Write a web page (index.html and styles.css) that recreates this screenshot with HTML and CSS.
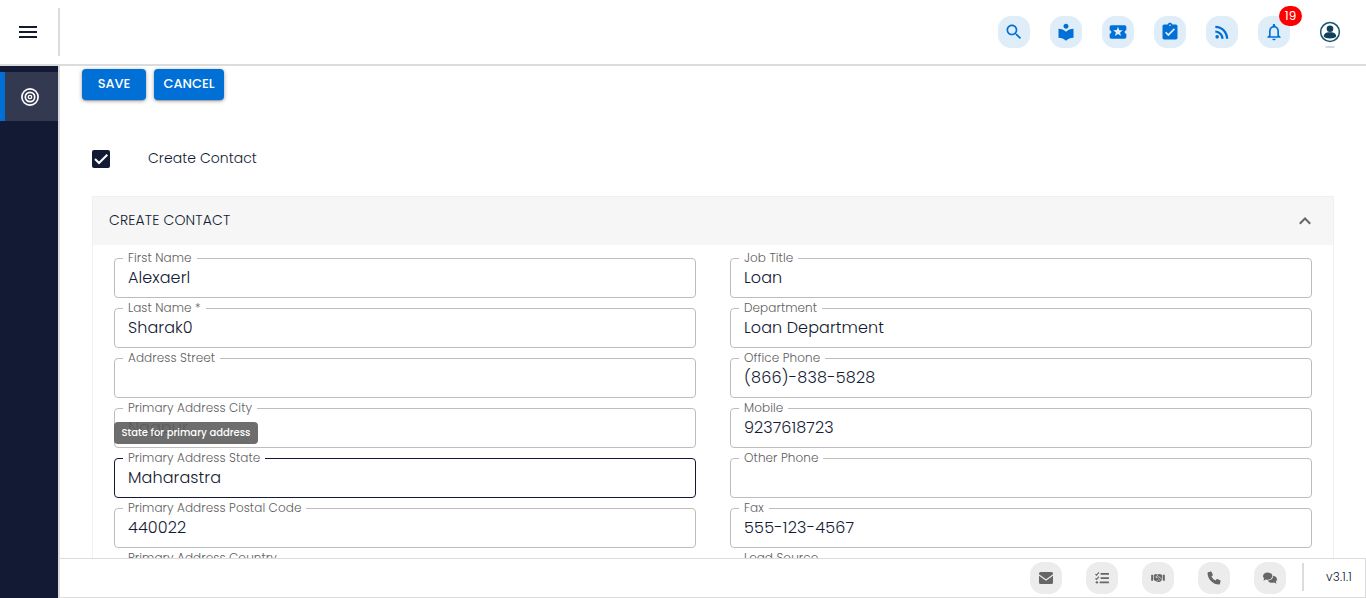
FILE: index.html
```html
<!DOCTYPE html>
<html lang="en">
<head>
<meta charset="utf-8">
<title>Create Contact</title>
<link rel="stylesheet" href="styles.css">
</head>
<body>
<div class="app">
  <header class="topbar">
    <div class="menu"><svg width="18" height="12" viewBox="0 0 18 12"><path d="M0 0h18v2H0zM0 5h18v2H0zM0 10h18v2H0z"/></svg></div>
    <nav class="actions">
      <div class="chip"><svg viewBox="0 0 24 24"><path d="M15.5 14h-.79l-.28-.27C15.41 12.59 16 11.11 16 9.5 16 5.91 13.09 3 9.5 3S3 5.91 3 9.5 5.91 16 9.5 16c1.61 0 3.09-.59 4.23-1.57l.27.28v.79l5 4.99L20.49 19l-4.99-5zm-6 0C7.01 14 5 11.99 5 9.5S7.01 5 9.5 5 14 7.01 14 9.5 11.99 14 9.5 14z"/></svg></div>
      <div class="chip"><svg viewBox="0 0 24 24"><path d="M12 11.55C9.64 9.35 6.48 8 3 8v11c3.48 0 6.64 1.35 9 3.55 2.36-2.19 5.52-3.55 9-3.55V8c-3.48 0-6.64 1.35-9 3.55zM12 8c1.66 0 3-1.34 3-3s-1.34-3-3-3-3 1.34-3 3 1.34 3 3 3z"/></svg></div>
      <div class="chip"><svg viewBox="0 0 24 24"><path d="M20 12c0-1.1.9-2 2-2V6c0-1.1-.9-2-2-2H4c-1.1 0-1.99.9-1.99 2v4c1.1 0 1.99.9 1.99 2s-.89 2-2 2v4c0 1.1.9 2 2 2h16c1.1 0 2-.9 2-2v-4c-1.1 0-2-.9-2-2zm-4.42 4.8L12 14.5l-3.58 2.3 1.08-4.12-3.29-2.69 4.24-.25L12 5.8l1.54 3.95 4.24.25-3.29 2.69 1.09 4.11z"/></svg></div>
      <div class="chip"><svg viewBox="0 0 24 24"><path d="M19 3h-4.18C14.4 1.84 13.3 1 12 1c-1.3 0-2.4.84-2.82 2H5c-1.1 0-2 .9-2 2v14c0 1.1.9 2 2 2h14c1.1 0 2-.9 2-2V5c0-1.1-.9-2-2-2zm-7 0c.55 0 1 .45 1 1s-.45 1-1 1-1-.45-1-1 .45-1 1-1zm-2 14l-4-4 1.41-1.41L10 14.17l6.59-6.59L18 9l-8 8z"/></svg></div>
      <div class="chip"><svg viewBox="0 0 24 24"><circle cx="6.18" cy="17.82" r="2.18"/><path d="M4 4.44v2.83c7.03 0 12.73 5.7 12.73 12.73h2.83c0-8.59-6.97-15.56-15.56-15.56zm0 5.66v2.83c3.9 0 7.07 3.17 7.07 7.07h2.83c0-5.47-4.43-9.9-9.9-9.9z"/></svg></div>
      <div class="chip"><svg viewBox="0 0 24 24"><path d="M12 22c1.1 0 2-.9 2-2h-4c0 1.1.9 2 2 2zm6-6v-5c0-3.07-1.63-5.64-4.5-6.32V4c0-.83-.67-1.5-1.5-1.5s-1.5.67-1.5 1.5v.68C7.64 5.36 6 7.92 6 11v5l-2 2v1h16v-1l-2-2zm-2 1H8v-6c0-2.48 1.51-4.5 4-4.5s4 2.02 4 4.5v6z"/></svg><span class="badge">19</span></div>
      <div class="avatar"><svg width="22" height="28" viewBox="0 0 22 28"><circle cx="11" cy="11" r="9.4" fill="#fff" stroke="#17566f" stroke-width="1.5"/><circle cx="11" cy="7.8" r="3.3" fill="#123f5a"/><path d="M4.8 15.6c0-2.7 1.9-4.1 4.2-4.4h4c2.3.3 4.2 1.700 4.200 4.400-1.400 1.400-3.400 1.900-6.200 1.900s-4.800-.5-6.200-1.900z" fill="#123f5a"/><path d="M6.500 26h9" stroke="#cbd6db" stroke-width="1.800"/></svg></div>
    </nav>
  </header>
  <div class="body">
    <aside class="sidebar">
      <div class="side-item"><svg width="18" height="18" viewBox="0 0 18 18" fill="none" stroke="#fff"><circle cx="9" cy="9" r="8.100" stroke-width="1.700"/><circle cx="9" cy="9" r="4.700" stroke-width="1.700"/><circle cx="9" cy="9" r="1.700" stroke-width="1.300"/></svg></div>
    </aside>
    <div class="page">
      <main class="content">
        <div class="buttons"><button class="btn save">SAVE</button><button class="btn cancel">CANCEL</button></div>
        <div class="toggle">
          <svg width="18" height="18" viewBox="0 0 18 18"><rect width="18" height="18" rx="2" fill="#131a33"/><path d="M3 9l4 4 8.300-8.300" fill="none" stroke="#fff" stroke-width="2"/></svg>
          <span class="toggle-text">Create Contact</span>
        </div>
        <section class="panel">
          <div class="panel-head"><span class="panel-title">CREATE CONTACT</span><svg width="12" height="8" viewBox="0 0 12 8"><path d="M.8 6.700L6 1.500l5.200 5.200" fill="none" stroke="#666" stroke-width="2"/></svg></div>
          <div class="grid">
            <fieldset class="field"><legend>First Name</legend><div class="value">Alexaerl</div></fieldset>
            <fieldset class="field"><legend>Job Title</legend><div class="value">Loan</div></fieldset>
            <fieldset class="field"><legend>Last Name *</legend><div class="value">Sharak0</div></fieldset>
            <fieldset class="field"><legend>Department</legend><div class="value">Loan Department</div></fieldset>
            <fieldset class="field"><legend>Address Street</legend><div class="value"></div></fieldset>
            <fieldset class="field"><legend>Office Phone</legend><div class="value number">(866)-838-5828</div></fieldset>
            <fieldset class="field"><legend>Primary Address City</legend><div class="value">Nagpur</div><div class="tooltip">State for primary address</div></fieldset>
            <fieldset class="field"><legend>Mobile</legend><div class="value">9237618723</div></fieldset>
            <fieldset class="field active"><legend>Primary Address State</legend><div class="value">Maharastra</div></fieldset>
            <fieldset class="field"><legend>Other Phone</legend><div class="value"></div></fieldset>
            <fieldset class="field"><legend>Primary Address Postal Code</legend><div class="value">440022</div></fieldset>
            <fieldset class="field"><legend>Fax</legend><div class="value number">555-123-4567</div></fieldset>
            <fieldset class="field"><legend>Primary Address Country</legend><div class="value"></div></fieldset>
            <fieldset class="field"><legend>Lead Source</legend><div class="value"></div></fieldset>
          </div>
        </section>
      </main>
      <footer class="footer">
        <div class="tool"><svg width="14" height="12" viewBox="0 0 14 12"><path d="M1.500 0h11Q14 0 14 1.500v.8L7 7.300 0 2.300v-.8Q0 0 1.500 0zM0 3.800l7 5 7-5v6.700q0 1.500-1.500 1.500h-11Q0 12 0 10.500z"/></svg></div>
        <div class="tool"><svg width="14" height="12" viewBox="0 0 15 13"><path d="M6 1h9v1.900H6zM6 5.600h9v1.900H6zM5 10.200h10v1.900H5z"/><circle cx="2" cy="11.200" r="1.300"/><path d="M.4 2.200l1.200 1.200L4.200.5M.4 6.800L1.600 8l2.600-2.900" fill="none" stroke="#666" stroke-width="1.200"/></svg></div>
        <div class="tool"><svg width="14" height="10" viewBox="0 0 15 11"><path d="M0 2h2v6.500H0zM13 2h2v6.500h-2z"/><path d="M2.800 2.300L5 1.200l2 .5L9.500 1l2.700 1.300v5.200L9.500 10H7L2.800 7.600z"/><path d="M7.500 2.200L5 4.500q1 1.200 2.500 0l1-.5 3.200 3M6.200 8l1.500 1.200M7.800 6.500l1.800 1.700" fill="none" stroke="#ececec" stroke-width=".8"/></svg></div>
        <div class="tool"><svg width="14" height="14" viewBox="0 0 15 15"><path d="M1.200 1.400L3.900.5q.8-.2 1.100.5l1.200 2.900q.2.600-.2 1L4.700 6q1.400 2.900 4.300 4.300l1.200-1.400q.4-.4 1-.2l2.800 1.200q.7.300.5 1l-.7 2.900q-.2.700-.9.700Q8 14.500 4.300 10.700.5 7 .6 2.200q0-.6.600-.8z"/></svg></div>
        <div class="tool"><svg width="14" height="12" viewBox="0 0 15 12"><path d="M5 0c2.800 0 5 1.700 5 3.900S7.800 7.800 5 7.800q-1 0-1.900-.3Q1.700 8.500.2 8.500q.8-.9 1.100-1.900Q0 5.500 0 3.900C0 1.700 2.200 0 5 0z"/><path d="M10.900 3.500c2.400.3 4.100 1.900 4.100 3.800q0 1.500-1.300 2.700.3 1 1.100 1.900-1.500 0-2.900-1-1 .3-2 .3c-2.100 0-4-1.100-4.700-2.600 3.400-.1 5.900-2.300 5.700-5.100z"/></svg></div>
        <div class="divider"></div>
        <span class="version">v3.1.1</span>
      </footer>
    </div>
  </div>
</div>
</body>
</html>
```
FILE: styles.css
```css
* { box-sizing: border-box; }
body { margin: 0; background: #fff; color: #131a33; font-family: Poppins, Inter, "Open Sans", sans-serif; font-weight: 300; }
svg { display: block; }
.app { display: flex; flex-direction: column; height: 598px; overflow: hidden; }
.topbar { display: flex; flex: none; height: 66px; border-bottom: 2px solid #dcdcdc; justify-content: space-between; }
.menu { display: flex; align-items: center; width: 60px; height: 48px; margin-top: 8px; padding-left: 19px; border-right: 2px solid #dcdcdc; }
.menu svg { fill: #131a33; }
.actions { display: flex; gap: 20px; padding: 16px 25px 0 0; }
.chip { position: relative; display: flex; align-items: center; justify-content: center; width: 32px; height: 32px; border-radius: 13px; background: #dfedf9; }
.chip svg { width: 20px; height: 20px; fill: #0070d6; }
.badge { position: absolute; left: 21px; top: -10px; width: 23px; height: 20px; border-radius: 10px; background: #f00; color: #fff; font-size: 12px; line-height: 20px; text-align: center; font-weight: 400; }
.avatar { width: 22px; padding-top: 5px; margin-left: 9px; }
.body { display: flex; flex: 1; min-height: 0; }
.sidebar { width: 60px; flex: none; padding-top: 6px; background: #131a33; border-right: 2px solid #dcdcdc; }
.side-item { display: flex; align-items: center; height: 49px; padding-left: 16px; border-left: 5px solid #0070d6; background: #333950; }
.page { display: flex; flex: 1; flex-direction: column; min-width: 0; }
.content { flex: 1; min-height: 0; overflow: hidden; padding: 3px 32px 0; }
.buttons { display: flex; gap: 8px; margin-left: -10px; }
.btn { height: 31px; padding: 0 0 1px; border: 0; border-radius: 4px; background: #0070d6; color: #fff; font: 500 13px Poppins, Inter, sans-serif; letter-spacing: -.05px; box-shadow: 0 1px 4px rgba(0,0,0,.35), 0 1px 1px rgba(0,0,0,.2); }
.save { width: 64px; }
.cancel { width: 70px; }
.toggle { display: flex; align-items: center; gap: 38px; height: 18px; margin-top: 50px; }
.toggle-text { padding-bottom: 2px; font-size: 14px; letter-spacing: .05px; }
.panel { margin-top: 28px; border: 1px solid #f0f0f0; }
.panel-head { display: flex; align-items: center; justify-content: space-between; height: 48px; padding: 0 22px 0 16px; background: #f6f6f6; }
.panel-title { padding-bottom: 2px; font-size: 14px; letter-spacing: .16px; }
.grid { display: grid; grid-template-columns: 582px 582px; column-gap: 34px; row-gap: 5px; padding: 8px 21px; }
.field { position: relative; min-width: 0; height: 45px; margin: 0; padding: 0 13px; border: 1px solid #bdbdbd; border-radius: 4px; }
.field.active { border-color: #131a33; }
legend { height: 11px; margin-left: -5px; padding: 0 5px; color: #606060; font-size: 12px; line-height: 9px; letter-spacing: .08px; white-space: nowrap; }
.value { height: 28px; font-size: 16px; line-height: 28px; letter-spacing: .08px; white-space: nowrap; }
.number { letter-spacing: .22px; }
.tooltip { position: absolute; left: -1px; top: 8px; width: 144px; height: 22px; border-radius: 4px; background: rgba(97,97,97,.92); color: #fff; font-size: 10px; line-height: 21px; font-weight: 500; text-align: center; white-space: nowrap; }
.footer { display: flex; flex: none; align-items: center; height: 40px; padding-left: 970px; border: 1px solid #dcdcdc; border-left: 0; background: #fff; }
.tool { display: flex; flex: none; align-items: center; justify-content: center; width: 32px; height: 32px; margin-right: 24px; border-radius: 13px; background: #ececec; }
.tool svg { fill: #666; }
.divider { flex: none; width: 2px; height: 28px; margin: 0 0 2px -8px; background: #dcdcdc; }
.version { margin: 0 0 2px 22px; font-size: 12px; letter-spacing: .16px; }
```
